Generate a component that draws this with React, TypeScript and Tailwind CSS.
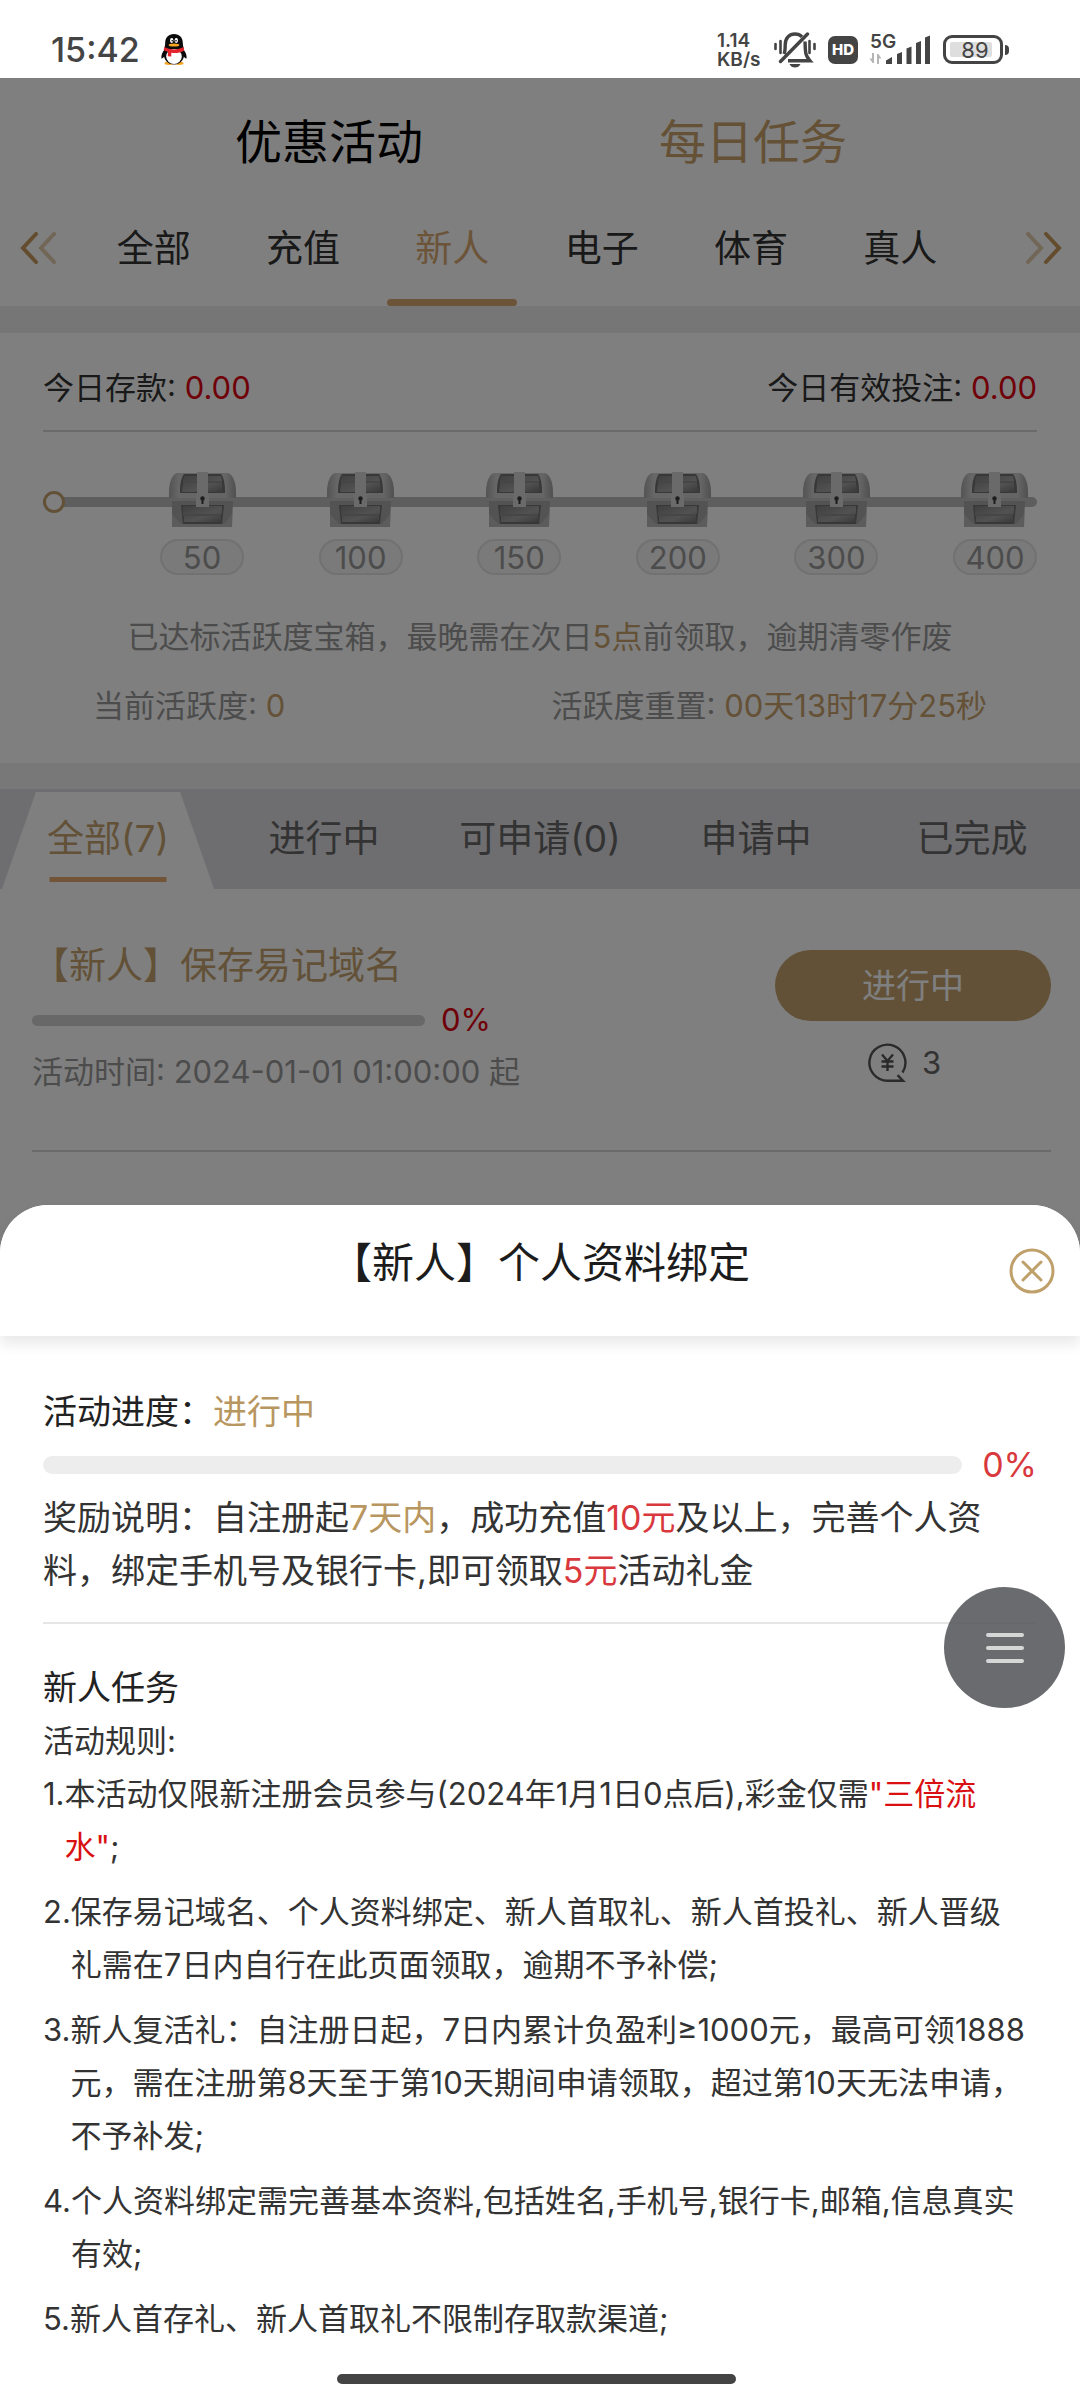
import React from 'react';

const CATEGORIES = ['全部', '充值', '新人', '电子', '体育', '真人'];
const CHEST_LEVELS = [50, 100, 150, 200, 300, 400];
const STATUS_TABS = ['全部(7)', '进行中', '可申请(0)', '申请中', '已完成'];

const Gold = ({ children }: { children: React.ReactNode }) => (
  <span className="text-[#b89660]">{children}</span>
);
const Red = ({ children }: { children: React.ReactNode }) => (
  <span className="text-[#d9383c]">{children}</span>
);

const RULES: React.ReactNode[] = [
  <>
    本活动仅限新注册会员参与(2024年1月1日0点后),彩金仅需
    <span className="text-[#d90f12]">
      "三倍流
      <br />
      水"
    </span>
    ;
  </>,
  <>
    保存易记域名、个人资料绑定、新人首取礼、新人首投礼、新人晋级
    <br />
    礼需在7日内自行在此页面领取，逾期不予补偿;
  </>,
  <>
    新人复活礼：自注册日起，7日内累计负盈利≥1000元，最高可领1888
    <br />
    元，需在注册第8天至于第10天期间申请领取，超过第10天无法申请，
    <br />
    不予补发;
  </>,
  <>
    个人资料绑定需完善基本资料,包括姓名,手机号,银行卡,邮箱,信息真实
    <br />
    有效;
  </>,
  <>新人首存礼、新人首取礼不限制存取款渠道;</>,
];

function Penguin() {
  return (
    <svg viewBox="0 0 26 31" className="h-[31px] w-[26px]" aria-hidden="true">
      <ellipse cx="8" cy="29.3" rx="4.5" ry="1.7" fill="#f5a623" />
      <ellipse cx="18" cy="29.3" rx="4.5" ry="1.7" fill="#f5a623" />
      <path d="M4 15C1.500 18 0 21 .4 24.500c.9.4 2.200-.9 3.200-2.500zM22 15c2.500 3 4 6 3.600 9.500-.9.4-2.200-.9-3.200-2.500z" fill="#0b0b0b" />
      <path d="M13 0C7.500 0 4.200 3.700 4.200 9c0 3-1.400 6-1.400 11 0 6 4.200 10.500 10.200 10.500S23.200 26 23.200 20c0-5-1.400-8-1.400-11C21.800 3.700 18.500 0 13 0z" fill="#0b0b0b" />
      <ellipse cx="13" cy="22.500" rx="7.800" ry="7.500" fill="#fff" />
      <path d="M3.500 13c5 3.200 14 3.200 19 0l.8 3.500c-4 2.400-8.800 3-13 2.300v3.700l-3.500-.3.2-4.500c-1.800-.5-3.100-1-4.300-1.700z" fill="#e3242b" />
      <ellipse cx="10.700" cy="6.500" rx="1.700" ry="2.400" fill="#fff" />
      <ellipse cx="15.300" cy="6.500" rx="1.700" ry="2.400" fill="#fff" />
      <circle cx="11.200" cy="6.800" r=".8" fill="#000" />
      <circle cx="15" cy="6.800" r=".8" fill="#000" />
      <ellipse cx="13" cy="11" rx="5.300" ry="1.500" fill="#f5a623" />
    </svg>
  );
}

function MutedBell() {
  return (
    <svg viewBox="0 0 42 36" className="h-9 w-[42px]" fill="none" stroke="#444" strokeWidth="3.400" aria-hidden="true">
      <path d="M1.500 12v5M6.500 9v12M35.500 9v12M40.500 12v5" strokeWidth="2.600" strokeLinecap="round" />
      <path d="M10 22C11 20 11.200 18 11.200 13c0-7 4-11 9.800-11 3 0 5.300 1 7 2.900" />
      <path d="M31 9.500c.3 5.500.2 9.500 1 12.500.6 2.300 2 4.500 4 6.800H14" />
      <path d="M33.500 2L6.500 29.500" strokeLinecap="round" />
      <path d="M15.500 32h11c-1 2.300-3 3.600-5.500 3.600s-4.500-1.300-5.500-3.600z" fill="#444" stroke="none" />
    </svg>
  );
}

function Signal() {
  return (
    <svg viewBox="0 0 61 29" className="h-[29px] w-[61px]" fill="#444" aria-hidden="true">
      <path d="M17 25.500l6-3.500v7h-6zM28 19l5-2v12h-5zM37.500 13.500l5-2V29h-5zM47 8l5-2v23h-5zM56 2.500l5-2V29h-5z" />
      <path d="M5 18v10H3.600L.5 23.500H3V18zM8 29V19h1.400l3.100 4.500H10V29z" fill="#b5b5b5" />
    </svg>
  );
}

function StatusBar() {
  return (
    <header className="flex h-[78px] shrink-0 items-center justify-between bg-white pl-[51px] pr-[71px] pt-[21px] text-[#444]">
      <div className="flex items-center gap-[21px]">
        <span className="text-[34px] font-medium leading-[40px]">15:42</span>
        <Penguin />
      </div>
      <div className="flex items-center">
        <div className="w-[57px] text-[19px] font-semibold">
          <div className="h-[19px] leading-[19px]">1.14</div>
          <div className="h-[19px] leading-[19px]">KB/s</div>
        </div>
        <MutedBell />
        <div className="ml-3 flex h-[28px] w-[30px] items-center justify-center rounded-[7px] bg-[#444] text-[15px] font-extrabold leading-none text-white">
          HD
        </div>
        <div className="relative ml-[11px]">
          <Signal />
          <span className="absolute -top-[3px] left-px text-[19px] font-semibold leading-5">5G</span>
        </div>
        <div className="ml-[13px] flex h-[29px] w-[60px] rounded-[9px] border-3 border-[#444] p-1">
          <div className="flex w-[42px] items-center justify-center rounded-[2px] bg-[#dedede] text-[22px] leading-none">
            <span className="pl-2">89</span>
          </div>
        </div>
        <div className="ml-[2px] h-[10px] w-1 rounded-r-full bg-[#444]" />
      </div>
    </header>
  );
}

function Chevrons({ className }: { className: string }) {
  return (
    <svg viewBox="0 0 36 32" className={`h-8 w-9 ${className}`} fill="none" stroke="#c99a5e" strokeWidth="4" strokeLinecap="round" aria-hidden="true">
      <path d="M16 2L3 16l13 14" />
      <path d="M34 2L21 16l13 14" opacity=".5" />
    </svg>
  );
}

function Chest() {
  return (
    <svg viewBox="0 0 67 55" className="h-[55px] w-[67px]" aria-hidden="true">
      <defs>
        <linearGradient id="frame" x1="0" y1="0" x2="1" y2="0">
          <stop offset="0" stopColor="#a8a8a8" />
          <stop offset=".15" stopColor="#cecece" />
          <stop offset=".85" stopColor="#cacaca" />
          <stop offset="1" stopColor="#a0a0a0" />
        </linearGradient>
        <linearGradient id="panel" x1="0" y1="0" x2="1" y2="1">
          <stop offset="0" stopColor="#808080" />
          <stop offset=".6" stopColor="#a4a4a4" />
          <stop offset="1" stopColor="#747474" />
        </linearGradient>
      </defs>
      <path d="M3 28h61l-1 27H3z" fill="#a6a6a6" />
      <path d="M0 29V20C0 9 4 1 9 1h49c5 0 9 8 9 19v9z" fill="url(#frame)" />
      <path d="M0 26h67v3H0z" fill="#bebebe" />
      <path d="M11 21c0-9 1-15 4-19h37c3 4 4 10 4 19z" fill="#707070" />
      <path d="M15 4h37l1 5H14zM14 11h39l1 9H13z" fill="url(#panel)" />
      <path d="M14 10h39" stroke="#aaa" strokeWidth="1" />
      <path d="M12 33h43l-2 19H14z" fill="#707070" />
      <path d="M14 34h39v8H14zM15 44h37v6H15z" fill="url(#panel)" />
      <path d="M14 43h38" stroke="#aaa" strokeWidth="1" />
      <path d="M3 42l9 10v3H3zM63 42l-8 10v3h8z" fill="#b8b8b8" />
      <path d="M12 52h43v3H12z" fill="#b8b8b8" />
      <path d="M28 0h11v24H28z" fill="#d4d4d4" />
      <path d="M27 22h13v13H27z" fill="#d4d4d4" />
      <circle cx="33.500" cy="26.500" r="2.200" fill="#3a3a3a" />
      <path d="M32.500 27h2v5h-2z" fill="#3a3a3a" />
    </svg>
  );
}

function CoinIcon() {
  return (
    <svg viewBox="0 0 39 39" className="h-[39px] w-[39px]" fill="none" stroke="#555" strokeWidth="2.400" aria-hidden="true">
      <path d="M34.500 29.500A18 18 0 1 0 20 37.700h15l-5.500-5.500" />
      <path d="M14 11.500l5.500 6.500 5.500-6.500M13.500 18.500h12M13.500 23.500h12M19.500 18v10" />
    </svg>
  );
}

function ActivityPage() {
  return (
    <main className="relative min-h-0 flex-1 overflow-hidden bg-white text-[31px] text-[#333]">
      <div className="flex h-32 items-center justify-center gap-[236px] pl-[2px] text-[47px] leading-[56px]">
        <button className="text-black">优惠活动</button>
        <button className="text-[#c9a26c]">每日任务</button>
      </div>
      <nav className="relative flex h-[100px] pl-[79px] pr-[105px] text-[37px]">
        <button aria-label="向左" className="absolute left-5 top-[26px]">
          <Chevrons className="" />
        </button>
        {CATEGORIES.map((name) => (
          <button
            key={name}
            className={`relative flex-1 pb-[37px] pt-[23px] leading-[40px] ${name === '新人' ? 'text-[#d9a870]' : ''}`}
          >
            {name}
            {name === '新人' && (
              <span className="absolute bottom-0 left-1/2 h-[7px] w-[130px] -translate-x-1/2 rounded-full bg-[#d9a870]" />
            )}
          </button>
        ))}
        <button aria-label="向右" className="absolute right-[18px] top-[26px]">
          <Chevrons className="rotate-180" />
        </button>
      </nav>
      <div className="h-[27px] bg-[#ececec]" />

      <section className="px-[43px] pb-8 pt-7">
        <div className="flex justify-between border-b-2 border-[#d4d4d4] pb-[15px] leading-[54px]">
          <p>
            今日存款: <span className="text-[#e00010]">0.00</span>
          </p>
          <p>
            今日有效投注: <span className="text-[#e00010]">0.00</span>
          </p>
        </div>
        <div className="relative mt-10">
          <div className="absolute inset-x-0 top-[25px] h-[10px] rounded-full bg-[#bcbcbc]" />
          <div className="absolute left-0 top-[19px] h-[22px] w-[22px] rounded-full border-3 border-[#c4a26e] bg-white" />
          <div className="relative flex justify-between pl-[117px]">
            {CHEST_LEVELS.map((level) => (
              <div key={level} className="flex w-[84px] flex-col items-center gap-3">
                <Chest />
                <span className="flex h-9 w-full items-center justify-center rounded-full border-2 border-[#e2e2e2] bg-[#f4f4f4] leading-none text-[#999]">
                  {level}
                </span>
              </div>
            ))}
          </div>
        </div>
        <p className="mt-[37px] text-center leading-[50px] text-[#999]">
          已达标活跃度宝箱，最晚需在次日<span className="text-[#c9a26c]">5点</span>前领取，逾期清零作废
        </p>
        <div className="mt-[19px] flex justify-between px-[50px] leading-[50px] text-[#999]">
          <p>
            当前活跃度: <span className="text-[#c9a26c]">0</span>
          </p>
          <p>
            活跃度重置: <span className="text-[#c9a26c]">00天13时17分25秒</span>
          </p>
        </div>
      </section>
      <div className="h-[26px] bg-[#f1f1f1]" />

      <nav className="flex h-[100px] bg-[#dcdce0] text-[37px] text-[#666]">
        {STATUS_TABS.map((name, i) => (
          <button key={name} className={`relative flex-1 ${i === 0 ? 'text-[#c4a26e]' : ''}`}>
            {i === 0 && (
              <>
                <span className="absolute inset-x-[2px] bottom-0 top-[3px] bg-white [clip-path:polygon(16%_0,84%_0,100%_100%,0_100%)]" />
                <span className="absolute bottom-[7px] left-1/2 h-[5px] w-[117px] -translate-x-1/2 bg-[#e6a872]" />
              </>
            )}
            <span className="relative">{name}</span>
          </button>
        ))}
      </nav>

      <article className="ml-8 mr-[29px] flex justify-between border-b-2 border-[#d4d4d4] pb-[53px] pt-[52px]">
        <div>
          <h2 className="text-[37px] leading-[50px] text-[#c4a26e]">【新人】保存易记域名</h2>
          <div className="mt-[2px] flex h-[54px] items-center gap-4">
            <div role="progressbar" aria-label="进度" aria-valuenow={0} className="h-[11px] w-[393px] rounded-full bg-[#d0d0d0]" />
            <span className="text-[#e00010]">0%</span>
          </div>
          <p className="leading-[50px] text-[#999]">活动时间: 2024-01-01 01:00:00 起</p>
        </div>
        <div className="w-[276px] pt-[9px]">
          <button className="h-[71px] w-full rounded-full bg-[#c4a26e] text-[34px] text-white">进行中</button>
          <div className="mt-[22px] flex items-center justify-center gap-[15px] pr-[17px] leading-[39px] text-[#666]">
            <CoinIcon />
            <span>3</span>
          </div>
        </div>
      </article>
      <div className="absolute inset-0 bg-black/50" />
    </main>
  );
}

function DetailSheet() {
  return (
    <section role="dialog" aria-labelledby="sheet-title" className="absolute inset-x-0 bottom-0 rounded-t-[48px] bg-white text-[#333]">
      <div className="relative h-[131px] rounded-t-[48px] bg-white pt-[37px] text-center shadow-[0_8px_14px_rgba(0,0,0,0.09)]">
        <h1 id="sheet-title" className="text-[42px] leading-[42px] text-[#1c1c1c]">【新人】个人资料绑定</h1>
        <button aria-label="关闭" className="absolute right-[25px] top-[43px]">
          <svg viewBox="0 0 46 46" className="h-[46px] w-[46px]" fill="none" stroke="#c0a06a" strokeWidth="3" strokeLinecap="round">
            <circle cx="23" cy="23" r="21" />
            <path d="M14 14l18 18M32 14L14 32" />
          </svg>
        </button>
      </div>

      <div className="px-[43px] pt-[49px] text-[34px] leading-[53px]">
        <p>
          <span className="text-[#222]">活动进度：</span>
          <Gold>进行中</Gold>
        </p>
        <div className="flex items-center gap-5">
          <div role="progressbar" aria-label="活动进度" aria-valuenow={0} className="h-[18px] flex-1 rounded-full bg-[#ededed]" />
          <span className="text-[34px] text-[#d9383c]">0%</span>
        </div>
        <p>
          奖励说明：自注册起<Gold>7天内</Gold>，成功充值<Red>10元</Red>及以上，完善个人资
          <br />
          料，绑定手机号及银行卡,即可领取<Red>5元</Red>活动礼金
        </p>
        <hr className="mt-[25px] border-t-2 border-[#e6e6e6]" />
        <h2 className="mt-[37px] text-[#222]">新人任务</h2>
        <div className="text-[31px]">
          <p>活动规则:</p>
          <ol className="flex flex-col gap-3">
            {RULES.map((rule, i) => (
              <li key={i} className="flex whitespace-nowrap">
                <span>{i + 1}.</span>
                <p>{rule}</p>
              </li>
            ))}
          </ol>
        </div>
      </div>
      <div className="flex justify-center pb-4 pr-[7px] pt-[29px]">
        <div className="h-[10px] w-[399px] rounded-full bg-[#444]" />
      </div>

      <button aria-label="菜单" className="absolute right-[15px] top-[382px] flex h-[121px] w-[121px] flex-col items-center justify-center gap-[9px] rounded-full bg-[#55565a]/88">
        <span className="h-1 w-[38px] rounded-full bg-[#d6d6d6]" />
        <span className="h-1 w-[38px] rounded-full bg-[#d6d6d6]" />
        <span className="h-1 w-[38px] rounded-full bg-[#d6d6d6]" />
      </button>
    </section>
  );
}

export default function App() {
  return (
    <div lang="zh-CN" className="relative flex h-screen flex-col overflow-hidden bg-white font-['Inter','Noto_Sans_CJK_SC',sans-serif]">
      <StatusBar />
      <ActivityPage />
      <DetailSheet />
    </div>
  );
}
